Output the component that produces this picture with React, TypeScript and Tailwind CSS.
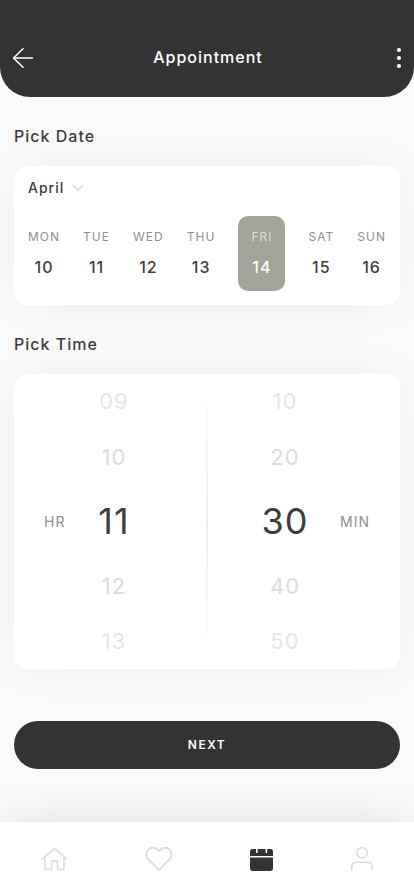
import { useState } from 'react';

const days = [
  { name: 'MON', date: 10 },
  { name: 'TUE', date: 11 },
  { name: 'WED', date: 12 },
  { name: 'THU', date: 13 },
  { name: 'FRI', date: 14 },
  { name: 'SAT', date: 15 },
  { name: 'SUN', date: 16 },
];

const hours = ['09', '10', '11', '12', '13'];
const minutes = ['10', '20', '30', '40', '50'];

// rows fade out the further they are from the selected one
const rowStyles = [
  'h-14 text-[22px] text-[#e9e6e7]',
  'h-14 text-[22px] text-[#dcdcdc]',
  'h-[73px] pb-1 text-4xl text-[#3f3d3e]',
  'h-14 text-[22px] text-[#dcdcdc]',
  'h-[54px] text-[22px] text-[#e9e6e7]',
];

const Header = () => (
  <header className="flex h-[97px] items-center justify-between rounded-b-[30px] bg-[#333333] pt-[18px] pl-3 pr-2.5 text-white">
    <button type="button" aria-label="Back" className="w-6">
      <svg width="22" height="22" viewBox="0 0 22 22" fill="none" stroke="currentColor" strokeWidth="1.6" strokeLinecap="round" strokeLinejoin="round">
        <path d="M11 1.8 1.6 11l9.4 9.2" />
        <path d="M1.6 11h18.8" />
      </svg>
    </button>
    <h1 className="pb-0.5 text-base font-medium tracking-[1px]">Appointment</h1>
    <button type="button" aria-label="More options" className="flex w-6 justify-end">
      <svg width="10" height="22" viewBox="0 0 10 22" fill="currentColor">
        <circle cx="5" cy="3" r="2.1" />
        <circle cx="5" cy="11" r="2.1" />
        <circle cx="5" cy="19" r="2.1" />
      </svg>
    </button>
  </header>
);

const DatePicker = () => {
  const [selected, setSelected] = useState(14);

  return (
    <div className="rounded-[14px] bg-white px-3.5 pb-3.5 pt-3 shadow-[0_0_50px_rgba(0,0,0,0.05)]">
      <button type="button" className="flex h-5 items-center gap-2 text-sm font-medium tracking-[1px] text-[#3f3d3e]">
        April
        <svg width="12" height="8" viewBox="0 0 12 8" fill="none" stroke="#d8d8d8" strokeWidth="1.4" strokeLinecap="round" strokeLinejoin="round">
          <path d="m1 1.5 5 4.5 5-4.5" />
        </svg>
      </button>
      <div className="mt-[18px] flex justify-between">
        {days.map(({ name, date }) => (
          <button
            key={date}
            type="button"
            aria-pressed={date === selected}
            onClick={() => setSelected(date)}
            className={`flex h-[75px] flex-col items-center rounded-[10px] pt-3 ${
              date === selected ? 'w-[47px] bg-[#a2a399] text-white' : 'text-[#3f3d3e]'
            }`}
          >
            <span className={`text-xs leading-[18px] tracking-[1px] ${date === selected ? 'text-[#dedfdb]' : 'text-[#918f90]'}`}>
              {name}
            </span>
            <span className="mt-2.5 text-base leading-[22px] font-medium tracking-[1px]">{date}</span>
          </button>
        ))}
      </div>
    </div>
  );
};

const Wheel = ({ values, label }: { values: string[]; label: string }) => (
  <div role="group" aria-label={label} className="flex w-20 flex-col">
    {values.map((value, i) => (
      <button key={value} type="button" aria-pressed={i === 2} className={`tracking-[1px] ${rowStyles[i]}`}>
        {value}
      </button>
    ))}
  </div>
);

const TimePicker = () => (
  <div className="grid grid-cols-[1fr_2px_1fr] items-center rounded-[14px] bg-white text-sm tracking-[1px] text-[#918f90] shadow-[0_0_50px_rgba(0,0,0,0.05)]">
    <div className="flex items-center pl-[30px]">
      <span className="w-[30px]">HR</span>
      <Wheel values={hours} label="Hour" />
    </div>
    <div className="h-[267px] bg-linear-to-b from-white via-[#efebec] to-white" />
    <div className="flex items-center pl-[37px]">
      <Wheel values={minutes} label="Minute" />
      <span className="ml-[15px]">MIN</span>
    </div>
  </div>
);

const NavBar = () => (
  <nav className="flex h-[74px] items-center justify-between bg-white px-10 shadow-[0_0_50px_rgba(0,0,0,0.11)]">
    <a href="#home" aria-label="Home">
      <svg width="28" height="26" viewBox="0 0 28 26" fill="none" stroke="#dcdcdc" strokeWidth="1.6" strokeLinecap="round" strokeLinejoin="round">
        <path d="M2.5 12.8 14.5 2.5 26.5 12.8" />
        <path d="M5 11v11.7q0 .8.8.8h4.9q.8 0 .8-.8v-7q0-.8.8-.8h4.4q.8 0 .8.8v7q0 .8.8.8h4.9q.8 0 .8-.8V11" />
      </svg>
    </a>
    <a href="#favorites" aria-label="Favorites">
      <svg width="28" height="26" viewBox="-1 0 28 26" fill="none" stroke="#dcdcdc" strokeWidth="1.8" strokeLinejoin="round">
        <path d="M14 24.2 3.3 13.2C.5 10 1 5.6 3.5 3.4c3.2-2.6 7.8-2.1 10.5 1.6 2.7-3.7 7.3-4.2 10.5-1.6 2.5 2.2 3 6.6.2 9.8Z" />
      </svg>
    </a>
    <a href="#calendar" aria-label="Calendar" aria-current="page">
      <svg width="26" height="26" viewBox="-1 0 26 26">
        <path fill="#333333" d="M3.5 3H7v3.5q0 .5.8.5t.8-.5V3h8v3.5q0 .5.8.5t.8-.5V3h3.5q2.3 0 2.3 2.3V10H1V5.3Q1 3 3.5 3Z" />
        <path fill="#333333" d="M1 11.6h23v11q0 2.4-2.4 2.4H3.4Q1 25 1 22.6Z" />
      </svg>
    </a>
    <a href="#profile" aria-label="Profile">
      <svg width="24" height="26" viewBox="0 0 24 26" fill="none" stroke="#dcdcdc" strokeWidth="1.6" strokeLinecap="round">
        <circle cx="12" cy="6.8" r="5.2" />
        <path d="M1.8 24v-3.5q0-4.3 4.3-4.3h11.8q4.3 0 4.3 4.3V24" />
      </svg>
    </a>
  </nav>
);

const App = () => (
  <div className="flex min-h-screen flex-col overflow-hidden bg-[#fafafa] font-['Inter','Liberation_Sans',sans-serif]">
    <Header />
    <main className="flex flex-1 flex-col px-3.5">
      <h2 className="mt-[27px] mb-[18px] text-base font-medium tracking-[1px] text-[#3f3d3e]">Pick Date</h2>
      <DatePicker />
      <h2 className="mt-[27px] mb-[18px] text-base font-medium tracking-[1px] text-[#3f3d3e]">Pick Time</h2>
      <TimePicker />
      <button type="button" className="mt-[52px] h-12 rounded-full bg-[#333333] text-xs font-semibold tracking-[1.5px] text-white">
        NEXT
      </button>
    </main>
    <NavBar />
  </div>
);

export default App;
